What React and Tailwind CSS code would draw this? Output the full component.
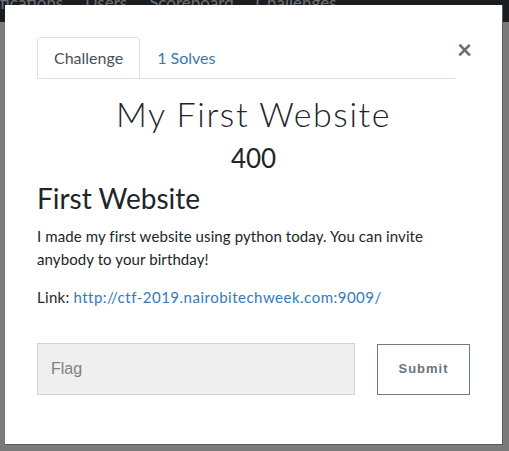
import React from 'react';

function App() {
  return (
    <div className="relative h-[451px] w-[509px] overflow-hidden bg-[#7b7b7b] font-['Lato',sans-serif]">
      {/* page navbar behind the overlay */}
      <div className="h-[32px] bg-[#1b1e21] flex gap-[22px] pl-0 -mt-[10px] pt-0 text-[#6d7074] text-[17px]">
        <span className="-ml-[4px]">ifications</span>
        <span>Users</span>
        <span>Scoreboard</span>
        <span>Challenges</span>
      </div>

      {/* modal */}
      <div className="absolute left-[5px] top-[5px] w-[498px] h-[440px] bg-white border border-[#5a5a5a] border-t-0 border-l-0">
        <div className="px-[32px] pt-[32px]">
          {/* tabs */}
          <div className="flex items-start">
            <div className="flex flex-1 border-b border-[#dee2e6]">
              <div className="px-[16px] h-[41px] flex items-center border border-[#dee2e6] border-b-white -mb-px rounded-t text-[16px] text-[#495057] bg-white">
                Challenge
              </div>
              <div className="px-[17px] h-[41px] flex items-center text-[16px] text-[#337ab7]">
                1 Solves
              </div>
            </div>
            <button className="w-[13px] ml-[1px] -mt-[1px] text-[#6b6b6b] text-[26px] font-bold leading-none">
              ×
            </button>
          </div>

          {/* title */}
          <h1 className="mt-[14px] text-center text-[34px] font-light tracking-[1.6px] text-[#212529] leading-[42px]">
            My First Website
          </h1>
          <h2 className="text-center text-[26px] text-[#212529] leading-[34px] mt-[6px]">400</h2>

          <h3 className="mt-[6px] text-[28px] text-[#212529] leading-[34px]">First Website</h3>

          <p className="mt-[10px] text-[15px] tracking-[0.1px] leading-[23px] text-[#212529]">
            I made my first website using python today. You can invite anybody to your birthday!
          </p>
          <p className="mt-[15px] text-[15px] leading-[23px] text-[#212529]">
            <span className="tracking-[0.3px]">Link:</span>{' '}
            <a className="text-[#337ab7] tracking-[0.5px]">http://ctf-2019.nairobitechweek.com:9009/</a>
          </p>

          {/* flag form */}
          <div className="mt-[34px] flex items-center">
            <input
              className="w-[318px] h-[52px] bg-[#efefef] border border-[#ced4da] px-[13px] text-[16px] font-['Liberation_Sans',sans-serif] placeholder:text-[#7b8188] outline-none"
              placeholder="Flag"
            />
            <button className="ml-auto w-[93px] h-[51px] border border-[#737b82] text-[13px] font-bold tracking-[1px] text-[#6c757d] font-['Liberation_Sans',sans-serif]">
              Submit
            </button>
          </div>
        </div>
      </div>
    </div>
  );
}

export default App;
